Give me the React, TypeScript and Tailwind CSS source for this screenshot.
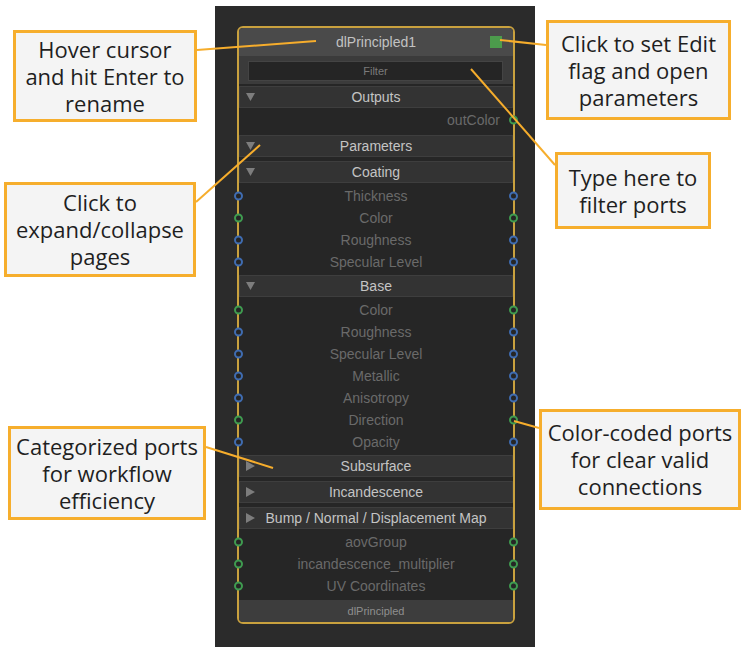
import type { ReactNode } from 'react'

type PortColor = 'blue' | 'green'
type Port = { label: string; color: PortColor }

const coating: Port[] = [
  { label: 'Thickness', color: 'blue' },
  { label: 'Color', color: 'green' },
  { label: 'Roughness', color: 'blue' },
  { label: 'Specular Level', color: 'blue' },
]

const base: Port[] = [
  { label: 'Color', color: 'green' },
  { label: 'Roughness', color: 'blue' },
  { label: 'Specular Level', color: 'blue' },
  { label: 'Metallic', color: 'blue' },
  { label: 'Anisotropy', color: 'blue' },
  { label: 'Direction', color: 'green' },
  { label: 'Opacity', color: 'blue' },
]

const extra: Port[] = [
  { label: 'aovGroup', color: 'green' },
  { label: 'incandescence_multiplier', color: 'green' },
  { label: 'UV Coordinates', color: 'green' },
]

// leader lines from the callouts to the node
const leaders = [
  [197, 50, 316, 41],
  [500, 40, 546, 45],
  [471, 69, 555, 165],
  [196, 202, 260, 145],
  [206, 447, 273, 468],
  [514, 421, 539, 428],
]

function Dot({ color, side }: { color: PortColor; side: 'left' | 'right' }) {
  return (
    <span
      className={`absolute top-1/2 -translate-y-1/2 w-[9px] h-[9px] rounded-full border-2 bg-[#262626] ${
        color === 'blue' ? 'border-[#3f6cb1]' : 'border-[#3f9b50]'
      } ${side === 'left' ? 'left-[-5px]' : 'right-[-5px]'}`}
    />
  )
}

function Row({ port }: { port: Port }) {
  return (
    <div className="relative h-[22px] flex items-center justify-center text-[14px] text-[#6a6a6a]">
      <Dot color={port.color} side="left" />
      {port.label}
      <Dot color={port.color} side="right" />
    </div>
  )
}

function Section({ title, open, className = '' }: { title: string; open?: boolean; className?: string }) {
  return (
    <div
      className={`h-[22px] grid grid-cols-[24px_1fr_24px] items-center bg-[#333333] border border-[#3e3e3e] ${className}`}
    >
      <span className="pl-[6px] flex">
        {open ? (
          <svg width="9" height="8" viewBox="0 0 9 8">
            <path d="M0 0H9L4.5 8Z" fill="#7d7d7d" />
          </svg>
        ) : (
          <svg width="9" height="10" viewBox="0 0 9 10">
            <path d="M0 0L9 5L0 10Z" fill="#7d7d7d" />
          </svg>
        )}
      </span>
      <span className="text-center text-[14px] leading-none text-[#c4c4c4] whitespace-nowrap">{title}</span>
      <span />
    </div>
  )
}

function Callout({ className, children }: { className: string; children: ReactNode }) {
  return (
    <div
      className={`flex items-center justify-center text-center bg-[#f4f4f4] border-[3px] border-[#f6ae2d] text-[22px] leading-[27px] text-[#1f1f1f] ${className}`}
    >
      <div>{children}</div>
    </div>
  )
}

export default function App() {
  return (
    <div className="relative w-[748px] h-[660px] bg-white flex overflow-hidden font-['Open_Sans',sans-serif]">
      {/* left notes */}
      <div className="w-[215px] shrink-0 flex flex-col items-start">
        <Callout className="ml-[13px] mt-[30px] w-[184px] h-[92px]">
          Hover cursor<br />and hit Enter to<br />rename
        </Callout>
        <Callout className="ml-[4px] mt-[60px] w-[192px] h-[95px]">
          Click to<br />expand/collapse<br />pages
        </Callout>
        <Callout className="ml-[8px] mt-[149px] w-[198px] h-[94px]">
          Categorized ports<br />for workflow<br />efficiency
        </Callout>
      </div>

      {/* node editor */}
      <div className="w-[320px] shrink-0 mt-[6px] h-[641px] bg-[#2b2b2b] pl-[22px] pt-[20px] font-['Liberation_Sans',Arial,sans-serif]">
        <div className="w-[278px] border-2 border-[#c9a13e] rounded-[6px] bg-[#262626]">
          <div className="relative h-[28px] bg-[#4a4a4a] rounded-t-[4px] flex items-center justify-center text-[14px] text-[#c2c2c2]">
            dlPrincipled1
            <span className="absolute right-[11px] top-[8px] w-[12px] h-[12px] bg-[#4c9b4c]" />
          </div>
          <div className="bg-[#3b3b3b] pt-[5px] pb-[3px] pl-[9px] pr-[10px]">
            <div className="h-[20px] bg-[#252525] border border-[#444444] flex items-center justify-center text-[11px] text-[#7b7b7b]">
              Filter
            </div>
          </div>

          <Section title="Outputs" open className="mt-[2px]" />
          <div className="relative h-[24px] flex items-center justify-end pr-[13px] text-[14px] text-[#6a6a6a]">
            outColor
            <Dot color="green" side="right" />
          </div>

          <Section title="Parameters" open className="mt-[3px]" />
          <Section title="Coating" open className="mt-[4px]" />
          <div className="mt-[2px]">
            {coating.map(p => <Row key={p.label} port={p} />)}
          </div>
          <Section title="Base" open className="mt-[2px]" />
          <div className="mt-[2px]">
            {base.map(p => <Row key={p.label} port={p} />)}
          </div>
          <Section title="Subsurface" className="mt-[2px]" />
          <Section title="Incandescence" className="mt-[4px]" />
          <Section title="Bump / Normal / Displacement Map" className="mt-[4px]" />
          <div className="mt-[2px]">
            {extra.map(p => <Row key={p.label} port={p} />)}
          </div>

          <div className="mt-[3px] h-[22px] bg-[#3d3d3d] rounded-b-[4px] flex items-center justify-center text-[11px] text-[#8f8f8f]">
            dlPrincipled
          </div>
        </div>
      </div>

      {/* right notes */}
      <div className="flex-1 flex flex-col items-start">
        <Callout className="ml-[11px] mt-[20px] w-[185px] h-[100px]">
          Click to set Edit<br />flag and open<br />parameters
        </Callout>
        <Callout className="ml-[20px] mt-[32px] w-[156px] h-[77px]">
          Type here to<br />filter ports
        </Callout>
        <Callout className="ml-[4px] mt-[180px] w-[202px] h-[101px]">
          Color-coded ports<br />for clear valid<br />connections
        </Callout>
      </div>

      <svg className="absolute inset-0 pointer-events-none" width="748" height="660">
        {leaders.map(([x1, y1, x2, y2], i) => (
          <line key={i} x1={x1} y1={y1} x2={x2} y2={y2} stroke="#f6ad2c" strokeWidth="2" />
        ))}
      </svg>
    </div>
  )
}
